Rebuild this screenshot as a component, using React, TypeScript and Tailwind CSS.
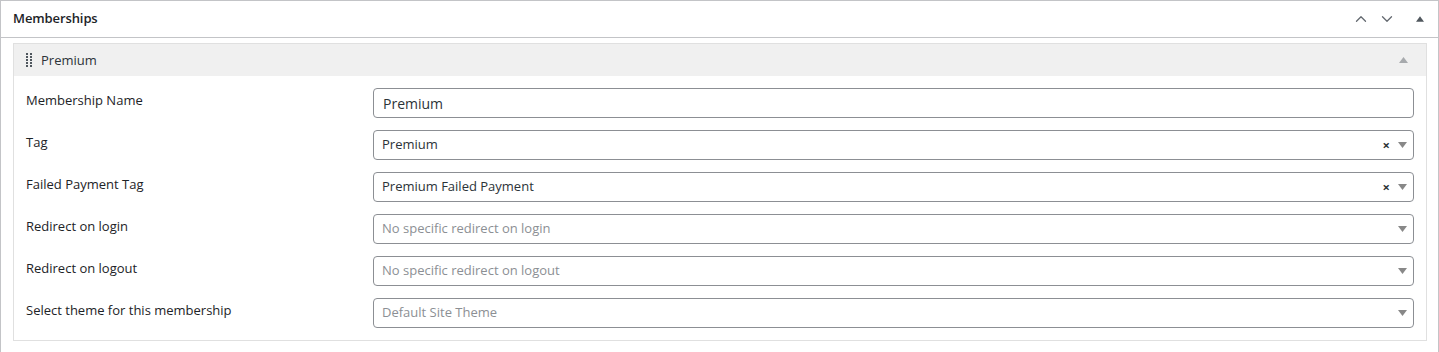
import { ChevronUp, ChevronDown } from "lucide-react";

type Field = {
  label: string;
  kind: "input" | "select";
  value: string;
  placeholder?: boolean;
  clearable?: boolean;
};

const FIELDS: Field[] = [
  { label: "Membership Name", kind: "input", value: "Premium" },
  { label: "Tag", kind: "select", value: "Premium", clearable: true },
  { label: "Failed Payment Tag", kind: "select", value: "Premium Failed Payment", clearable: true },
  { label: "Redirect on login", kind: "select", value: "No specific redirect on login", placeholder: true },
  { label: "Redirect on logout", kind: "select", value: "No specific redirect on logout", placeholder: true },
  { label: "Select theme for this membership", kind: "select", value: "Default Site Theme", placeholder: true },
];

function Caret({ up, className }: { up?: boolean; className?: string }) {
  return (
    <svg width="9" height="6" viewBox="0 0 9 6" className={className}>
      {up ? <path d="M0 6 L4.5 0 L9 6 Z" fill="currentColor" /> : <path d="M0 0 L9 0 L4.5 6 Z" fill="currentColor" />}
    </svg>
  );
}

function DragHandle() {
  return (
    <svg width="6" height="14" viewBox="0 0 6 14" className="text-[#50575e]">
      {[0, 3, 6, 9, 12].map((y) => (
        <g key={y}>
          <rect x="0" y={y} width="2" height="2" fill="currentColor" />
          <rect x="4" y={y} width="2" height="2" fill="currentColor" />
        </g>
      ))}
    </svg>
  );
}

export default function App() {
  return (
    <div className="bg-white min-h-[352px] font-['Open_Sans','Noto_Sans',sans-serif] text-[#1d2327]">
      <div className="border border-[#c3c4c7] border-b-0 w-[1439px] min-h-[352px]">
        <div className="h-[37px] flex items-center justify-between border-b border-[#c3c4c7] pl-[12px] pr-[14px]">
          <h2 className="text-[13px] font-semibold tracking-[-0.1px]">Memberships</h2>
          <div className="flex items-center text-[#646970]">
            <ChevronUp size={18} strokeWidth={1.75} className="mr-[8px]" />
            <ChevronDown size={18} strokeWidth={1.75} className="mr-[20px]" />
            <Caret up className="text-[#50575e] w-[8px]" />
          </div>
        </div>

        <div className="pt-[5px] pl-[12px] pr-[11px]">
          <div className="border border-[#e0e0e0]">
            <div className="h-[32px] bg-[#f0f0f0] flex items-center justify-between pl-[12px] pr-[18px]">
              <div className="flex items-center gap-[9px]">
                <DragHandle />
                <span className="text-[13px] text-[#2c3338] pt-[1px]">Premium</span>
              </div>
              <Caret up className="text-[#a7aaad]" />
            </div>

            <div className="flex flex-col gap-[12px] pt-[12px] pb-[12px] pl-[12px] pr-[12px]">
              {FIELDS.map((f) => (
                <div key={f.label} className="grid grid-cols-[347px_1fr] items-start">
                  <label className="text-[13px] pt-[3px] text-[#1d2327]">{f.label}</label>
                  {f.kind === "input" ? (
                    <div className="h-[30px] border border-[#8c8f94] rounded-[4px] flex items-center px-[9px] text-[14px] text-[#2c3338]">
                      {f.value}
                    </div>
                  ) : (
                    <div className="h-[30px] border border-[#8c8f94] rounded-[4px] flex items-center pl-[8px] pr-[6px]">
                      <span className={"flex-1 text-[13px] " + (f.placeholder ? "text-[#8c8f94]" : "text-[#2c3338]")}>
                        {f.value}
                      </span>
                      {f.clearable && <span className="text-[13px] font-bold text-[#2c3338] mr-[8px] leading-none">×</span>}
                      <Caret className="text-[#888]" />
                    </div>
                  )}
                </div>
              ))}
            </div>
          </div>
        </div>
      </div>
    </div>
  );
}
